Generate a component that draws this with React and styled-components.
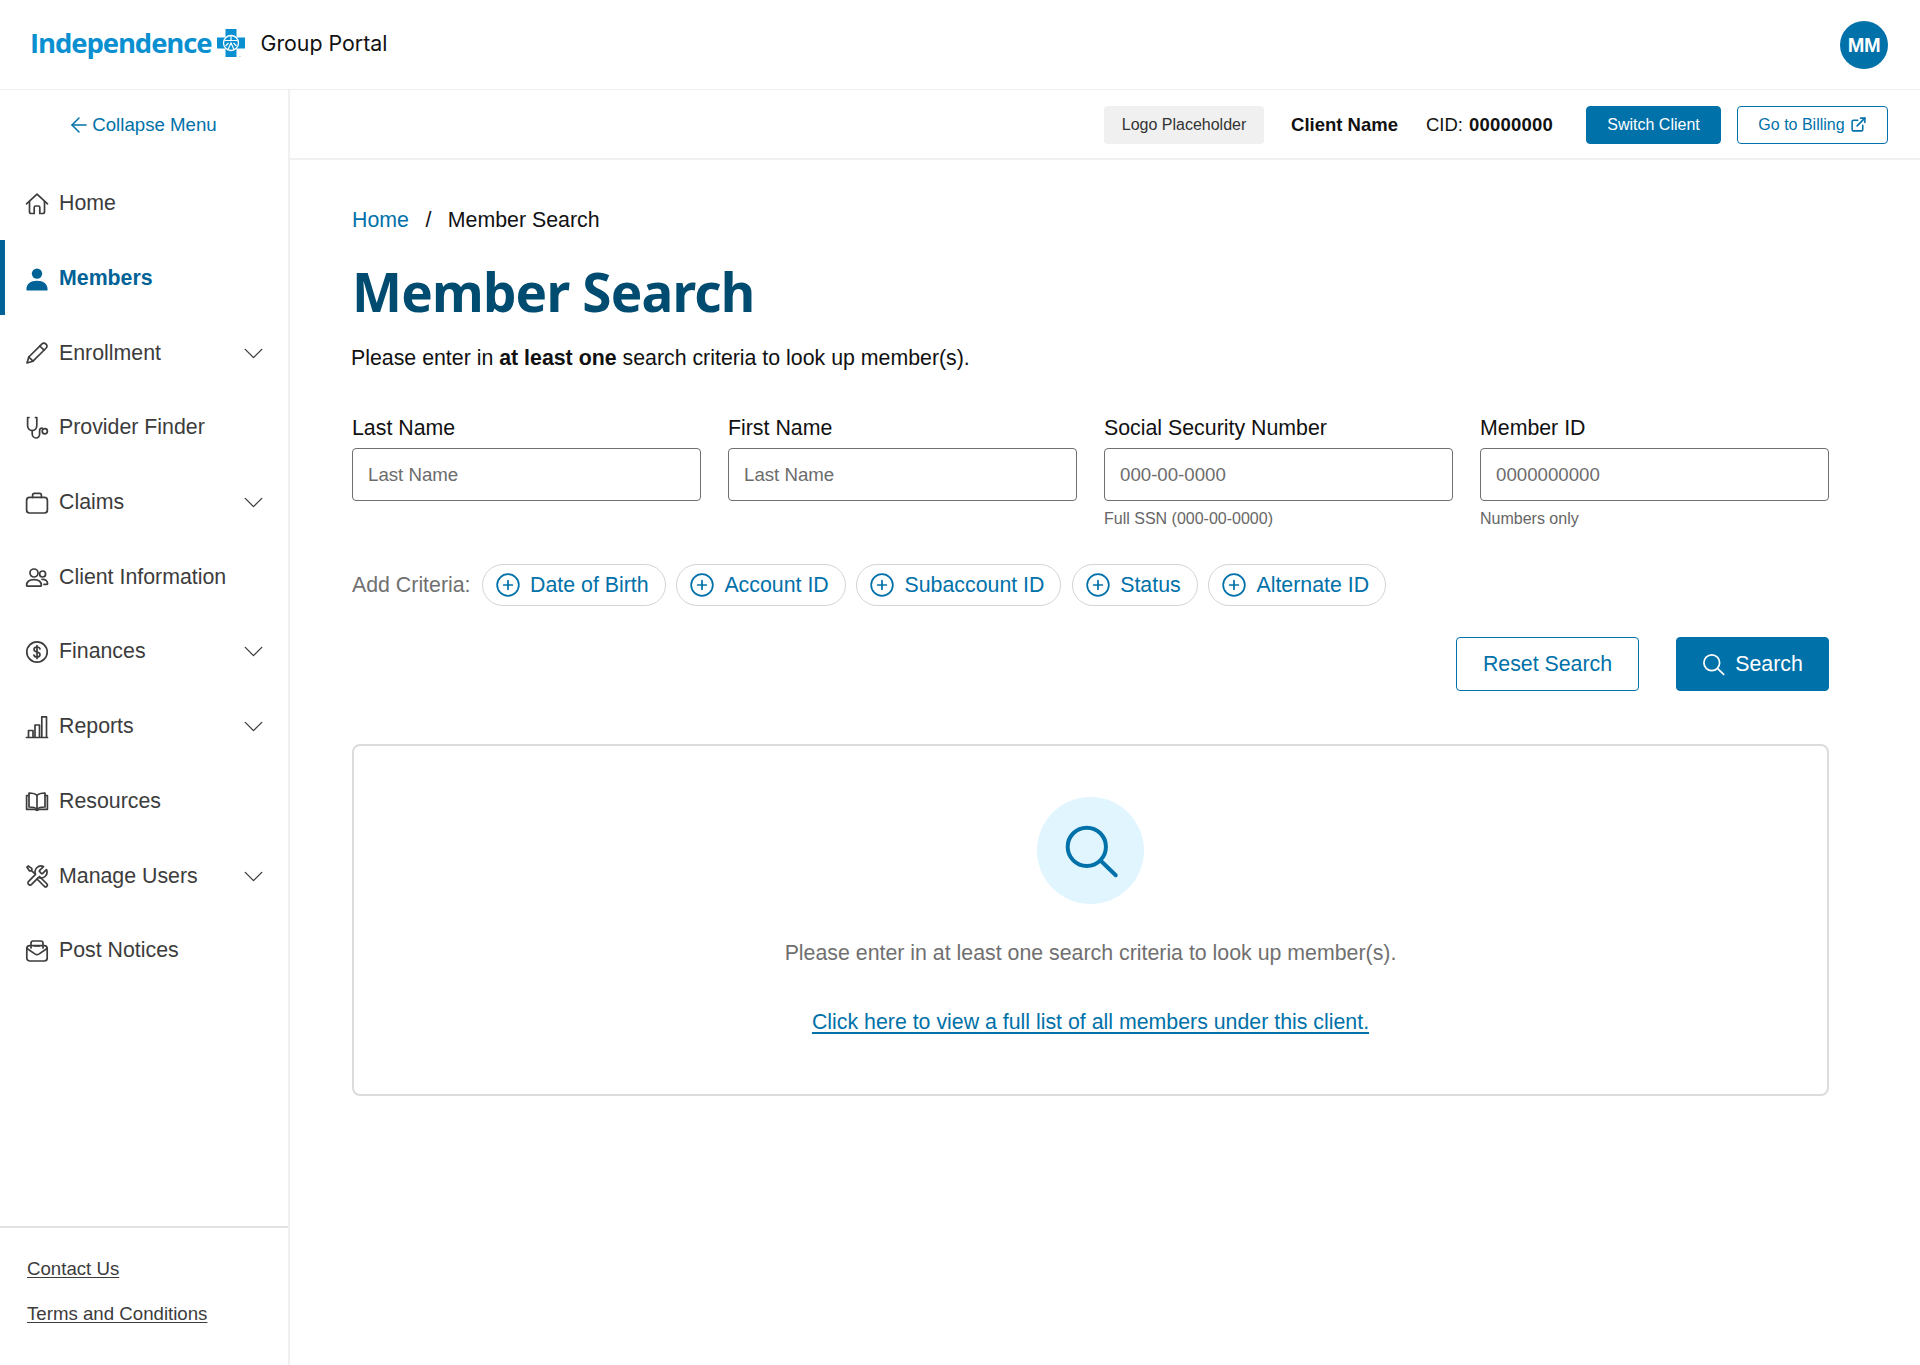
import React from "react";
import styled, { createGlobalStyle } from "styled-components";
import { ArrowLeft, ChevronDown, CirclePlus, ExternalLink } from "lucide-react";

const GlobalStyle = createGlobalStyle`
  html, body {
    margin: 0;
    padding: 0;
    background: #fff;
    font-family: "Liberation Sans", Arial, sans-serif;
    color: #111;
  }
  * { box-sizing: border-box; }
`;

const Shell = styled.div`
  min-height: 1365px;
  display: flex;
  flex-direction: column;
`;

const Header = styled.header`
  height: 90px;
  flex: none;
  display: flex;
  align-items: center;
  justify-content: space-between;
  padding: 0 32px 0 30px;
  border-bottom: 1px solid #eeeeee;
`;

const Brand = styled.div`
  display: flex;
  align-items: center;
  margin-top: -3px;
`;

const LogoWord = styled.span`
  font-family: "Open Sans", "Noto Sans", sans-serif;
  font-weight: 700;
  font-size: 27.5px;
  letter-spacing: -1.1px;
  color: #0a8fd1;
  line-height: 1;
`;

const LogoMark = styled.svg`
  width: 28px;
  height: 28px;
  margin-left: 6px;
  overflow: visible;
`;

const PortalName = styled.span`
  font-family: "Inter", "Noto Sans", sans-serif;
  font-size: 21.33px;
  color: #111;
  margin-left: 15px;
`;

const Avatar = styled.div`
  width: 48px;
  height: 48px;
  margin-top: 1px;
  border-radius: 50%;
  background: #0071a9;
  color: #fff;
  font-weight: 700;
  font-size: 20px;
  letter-spacing: -0.5px;
  display: flex;
  align-items: center;
  justify-content: center;
`;

const Body = styled.div`
  flex: 1;
  display: flex;
`;

const Sidebar = styled.aside`
  width: 290px;
  flex: none;
  display: flex;
  flex-direction: column;
  border-right: 2px solid #f0f0f0;
`;

const CollapseLink = styled.a`
  height: 70px;
  display: flex;
  align-items: center;
  justify-content: center;
  gap: 1px;
  padding-right: 4px;
  color: #0071a9;
  font-size: 18.67px;
`;

const NavList = styled.nav`
  display: flex;
  flex-direction: column;
  padding-top: 5.5px;
`;

const NavRow = styled.a`
  height: 74.7px;
  display: flex;
  align-items: center;
  gap: 10px;
  padding: 2px 18px 0 ${(p) => (p.$active ? "20px" : "25px")};
  border-left: ${(p) => (p.$active ? "5px solid #006296" : "none")};
  font-size: 21.33px;
  font-weight: ${(p) => (p.$active ? 700 : 400)};
  color: ${(p) => (p.$active ? "#006296" : "#3c3c3c")};
  svg { flex: none; }
`;

const NavLabel = styled.span`
  flex: 1;
`;

const NavIcon = styled.svg`
  width: 24px;
  height: 24px;
  fill: none;
  stroke: currentColor;
  stroke-width: 1.7;
  stroke-linecap: round;
  stroke-linejoin: round;
`;

const SideFooter = styled.div`
  margin-top: auto;
  height: 139px;
  border-top: 2px solid #e2e2e2;
  padding: 30px 0 0 27px;
  display: flex;
  flex-direction: column;
  align-items: flex-start;
  gap: 24px;
`;

const FooterLink = styled.a`
  font-size: 18.67px;
  line-height: 21px;
  color: #3c3c3c;
  text-decoration: underline;
  text-underline-offset: 2px;
`;

const Main = styled.main`
  flex: 1;
  min-width: 0;
  display: flex;
  flex-direction: column;
`;

const ClientBar = styled.div`
  height: 70px;
  flex: none;
  display: flex;
  align-items: center;
  justify-content: flex-end;
  padding: 1px 32px 0 0;
  border-bottom: 2px solid #f0f0f0;
`;

const LogoPlaceholder = styled.div`
  width: 160px;
  height: 38px;
  border-radius: 4px;
  background: #f0f0f0;
  color: #333;
  font-size: 16px;
  display: flex;
  align-items: center;
  justify-content: center;
`;

const ClientName = styled.strong`
  font-size: 18.5px;
  margin-left: 27px;
`;

const ClientId = styled.span`
  font-size: 18.5px;
  margin-left: 28px;
  margin-right: 33px;
  b { margin-left: 1px; letter-spacing: 0.2px; }
`;

const SmallButton = styled.a`
  height: 38px;
  border-radius: 4px;
  display: flex;
  align-items: center;
  justify-content: center;
  gap: 5px;
  font-size: 16px;
  width: ${(p) => p.$width}px;
  margin-left: ${(p) => p.$gap || 0}px;
  color: ${(p) => (p.$filled ? "#fff" : "#0071a9")};
  background: ${(p) => (p.$filled ? "#0071a9" : "#fff")};
  border: 1.5px solid #0071a9;
`;

const Content = styled.div`
  padding: 45px 91px 0 62px;
`;

const Breadcrumb = styled.div`
  display: flex;
  font-size: 21.33px;
  line-height: 30px;
  gap: 16.5px;
`;

const Crumb = styled.a`
  color: #0071a9;
`;

const Title = styled.h1`
  margin: 21px 0 0;
  font-family: "Noto Sans", "Open Sans", sans-serif;
  font-weight: 700;
  font-size: 53px;
  line-height: 72px;
  color: #004b70;
  letter-spacing: -0.8px;
`;

const Intro = styled.p`
  margin: 15px 0 0 -1px;
  font-size: 21.33px;
  line-height: 30px;
  color: #111;
`;

const FieldGrid = styled.div`
  margin-top: 40px;
  display: grid;
  grid-template-columns: repeat(4, 349px);
  column-gap: 27px;
`;

const Field = styled.div`
  display: flex;
  flex-direction: column;
`;

const FieldLabel = styled.label`
  font-size: 21.33px;
  line-height: 30px;
  margin-bottom: 5px;
`;

const TextInput = styled.input`
  height: 53px;
  width: 100%;
  border: 1.5px solid #6f6f6f;
  border-radius: 4px;
  padding: 0 15px;
  font: 400 18.67px "Liberation Sans", Arial, sans-serif;
  outline: none;
  &::placeholder { color: #6c6c6c; opacity: 1; }
`;

const Helper = styled.div`
  font-size: 16px;
  line-height: 20px;
  color: #666;
  margin-top: 8px;
`;

const CriteriaRow = styled.div`
  margin-top: 35px;
  display: flex;
  align-items: center;
  height: 42px;
`;

const CriteriaLabel = styled.span`
  font-size: 21.33px;
  color: #707070;
  margin-right: 11px;
`;

const Chip = styled.a`
  height: 42px;
  padding: 0 16px 0 12px;
  margin-right: 10.3px;
  border: 1.5px solid #d4d4d4;
  border-radius: 21px;
  display: flex;
  align-items: center;
  gap: 9.5px;
  font-size: 21.33px;
  color: #0071a9;
`;

const Actions = styled.div`
  margin-top: 31px;
  display: flex;
  justify-content: flex-end;
  gap: 37px;
`;

const ActionButton = styled.a`
  height: 54px;
  width: ${(p) => p.$width}px;
  padding-top: 1px;
  border-radius: 4px;
  display: flex;
  align-items: center;
  justify-content: center;
  gap: 10px;
  font-size: 21.33px;
  color: ${(p) => (p.$filled ? "#fff" : "#0071a9")};
  background: ${(p) => (p.$filled ? "#0071a9" : "#fff")};
  border: 1.5px solid #0071a9;
`;

const EmptyCard = styled.section`
  margin-top: 53px;
  height: 352px;
  border: 2px solid #dcdcdc;
  border-radius: 8px;
  display: flex;
  flex-direction: column;
  align-items: center;
  padding-top: 51px;
`;

const IconCircle = styled.div`
  width: 107px;
  height: 107px;
  border-radius: 50%;
  background: #e1f5fe;
  display: flex;
  align-items: center;
  justify-content: center;
  color: #0071a9;
`;

const EmptyText = styled.p`
  margin: 34px 0 0;
  font-size: 21.33px;
  line-height: 30px;
  color: #707070;
`;

const EmptyLink = styled.a`
  margin-top: 39px;
  font-size: 21.33px;
  line-height: 30px;
  color: #0071a9;
  text-decoration: underline;
  text-underline-offset: 3px;
`;

const SearchGlyph = ({ size, width }) => (
  <svg width={size} height={size} viewBox="0 0 24 24" fill="none" stroke="currentColor" strokeWidth={width} strokeLinecap="round">
    <circle cx="10.2" cy="10.2" r="8.2" />
    <path d="M16.4 16.4 22.6 22.4" />
  </svg>
);

const icons = {
  home: (
    <NavIcon viewBox="0 0 24 24">
      <path d="M1.5 11.8 12 2.2l10.5 9.6" />
      <path d="M4.5 9.5v10.2c0 1 .7 1.8 1.8 1.8h2.9v-6a1.5 1.5 0 0 1 1.5-1.5h2.600a1.500 1.500 0 0 1 1.500 1.500v6h2.900c1 0 1.800-.8 1.800-1.800V9.500" />
    </NavIcon>
  ),
  members: (
    <NavIcon viewBox="0 0 24 24" style={{ fill: "currentColor", stroke: "none" }}>
      <circle cx="12" cy="6.600" r="5.200" />
      <path d="M1.400 22.400c0-5.400 4.200-8.600 10.600-8.600s10.600 3.200 10.600 8.600c0 .6-.4 1-1 1H2.400c-.6 0-1-.4-1-1z" />
    </NavIcon>
  ),
  enrollment: (
    <NavIcon viewBox="0 0 24 24">
      <path d="M17 2.800a2.600 2.600 0 0 1 3.700 0l.5.5a2.600 2.600 0 0 1 0 3.700L8 20.200l-6 1.800 1.800-6z" />
      <path d="m14.800 5 4.200 4.200M3.800 16 8 20.200" />
    </NavIcon>
  ),
  provider: (
    <NavIcon viewBox="0 0 24 24">
      <path d="M4 1.500H2.600v8c0 3 2.200 5 4.600 5s4.600-2 4.600-5v-8h-1.400" />
      <path d="M7.200 14.500v3.300c0 2.400 1.700 4.200 3.800 4.200s3.600-1.800 3.600-4v-3.400c0-1.700 1.200-2.600 2.600-2.600" />
      <circle cx="19.800" cy="15.200" r="2.600" />
    </NavIcon>
  ),
  claims: (
    <NavIcon viewBox="0 0 24 24">
      <rect x="1.600" y="6.400" width="20.800" height="15.600" rx="3" />
      <path d="M7.600 6.400V4.200c0-1 .8-1.800 1.800-1.800h5.200c1 0 1.800.8 1.800 1.800v2.200" />
    </NavIcon>
  ),
  client: (
    <NavIcon viewBox="0 0 24 24">
      <circle cx="9" cy="8" r="4" />
      <circle cx="17.600" cy="9" r="3" />
      <path d="M1.600 20.600c0-3.800 3-6 7.400-6s7.400 2.200 7.400 6c0 .4-.3.6-.6.6H2.200c-.3 0-.6-.2-.6-.6z" />
      <path d="M17 14.400c3.400-.3 5.600 1.400 5.600 4.400 0 .4-.3.6-.6.6h-3" />
    </NavIcon>
  ),
  finances: (
    <NavIcon viewBox="0 0 24 24">
      <circle cx="12" cy="12" r="10.200" />
      <path d="M15 9c-.3-1.200-1.500-2-3-2-1.800 0-3 1-3 2.500 0 3.300 6 1.700 6 5 0 1.500-1.300 2.500-3 2.500-1.600 0-2.800-.8-3.100-2M12 5.600v12.800" />
    </NavIcon>
  ),
  reports: (
    <NavIcon viewBox="0 0 24 24">
      <path d="M1.500 22.500h21M3.500 22.500V15.500h4.500v7M10 22.500V10h4.500v12.500M16.800 22.500V1.800h4.700v20.700" />
    </NavIcon>
  ),
  resources: (
    <NavIcon viewBox="0 0 24 24">
      <path d="M12 6.500C10.500 4.800 8 4 4 4v14c4 0 6.500.6 8 2.200 1.500-1.600 4-2.200 8-2.200V4c-4 0-6.500.8-8 2.500zM12 6.500v13.700" />
      <path d="M4 6.500H1.600v13.800H9c1.300 0 2.300.4 3 1 .7-.6 1.700-1 3-1h7.400V6.500H20" />
    </NavIcon>
  ),
  manage: (
    <NavIcon viewBox="0 0 24 24">
      <path d="M14.700 6.300a1 1 0 0 0 0 1.400l1.600 1.600a1 1 0 0 0 1.400 0l3.770-3.770a6 6 0 0 1-7.940 7.940l-6.910 6.910a2.120 2.120 0 0 1-3-3l6.910-6.910a6 6 0 0 1 7.940-7.940z" />
      <path d="M2 3.200 3.200 2l3.600 2.400v2.400H4.400zM6.800 6.800l2.700 2.700M14.500 12.500 22 20a1.800 1.800 0 0 1-2.500 2.500L12 15" />
    </NavIcon>
  ),
  notices: (
    <NavIcon viewBox="0 0 24 24">
      <path d="M6 9V4.200C6 3 7 2 8.200 2h7.600C17 2 18 3 18 4.200V9" />
      <rect x="1.800" y="6.600" width="20.400" height="15.400" rx="3" />
      <path d="m2 9.500 7.800 5.400c1.400.9 3 .9 4.400 0L22 9.500M9.500 6.800h5" />
    </NavIcon>
  ),
};

const navItems = [
  { key: "home", label: "Home" },
  { key: "members", label: "Members", active: true },
  { key: "enrollment", label: "Enrollment", sub: true },
  { key: "provider", label: "Provider Finder" },
  { key: "claims", label: "Claims", sub: true },
  { key: "client", label: "Client Information" },
  { key: "finances", label: "Finances", sub: true },
  { key: "reports", label: "Reports", sub: true },
  { key: "resources", label: "Resources" },
  { key: "manage", label: "Manage Users", sub: true },
  { key: "notices", label: "Post Notices" },
];

const fields = [
  { label: "Last Name", placeholder: "Last Name" },
  { label: "First Name", placeholder: "Last Name" },
  { label: "Social Security Number", placeholder: "000-00-0000", help: "Full SSN (000-00-0000)" },
  { label: "Member ID", placeholder: "0000000000", help: "Numbers only" },
];

const criteria = ["Date of Birth", "Account ID", "Subaccount ID", "Status", "Alternate ID"];

export default function App() {
  return (
    <>
      <GlobalStyle />
      <Shell>
        <Header>
          <Brand>
            <LogoWord>Independence</LogoWord>
            <LogoMark viewBox="0 0 28 28">
              <path fill="#0a8fd1" d="M8.500 0h11v8.500H28v11h-8.500V28h-11v-8.500H0v-11h8.500z" />
              <circle cx="14" cy="14" r="7.500" fill="none" stroke="#fff" strokeWidth="1.300" />
              <path fill="none" stroke="#fff" strokeWidth="1.200" d="M8 11.500h12M14 7v4.500M11 20.500l3-6.500 3 6.500M8.500 17l3-3M19.500 17l-3-3" />
              <circle cx="23" cy="27.500" r="0.600" fill="#7fc4e6" />
            </LogoMark>
            <PortalName>Group Portal</PortalName>
          </Brand>
          <Avatar>MM</Avatar>
        </Header>
        <Body>
          <Sidebar>
            <CollapseLink>
              <ArrowLeft size={24} strokeWidth={1.5} />
              Collapse Menu
            </CollapseLink>
            <NavList>
              {navItems.map((item) => (
                <NavRow key={item.key} $active={item.active}>
                  {icons[item.key]}
                  <NavLabel>{item.label}</NavLabel>
                  {item.sub && <ChevronDown size={33} strokeWidth={1} />}
                </NavRow>
              ))}
            </NavList>
            <SideFooter>
              <FooterLink>Contact Us</FooterLink>
              <FooterLink>Terms and Conditions</FooterLink>
            </SideFooter>
          </Sidebar>
          <Main>
            <ClientBar>
              <LogoPlaceholder>Logo Placeholder</LogoPlaceholder>
              <ClientName>Client Name</ClientName>
              <ClientId>
                CID: <b>00000000</b>
              </ClientId>
              <SmallButton $filled $width={135}>Switch Client</SmallButton>
              <SmallButton $width={151} $gap={16}>
                Go to Billing
                <ExternalLink size={17} strokeWidth={2.2} />
              </SmallButton>
            </ClientBar>
            <Content>
              <Breadcrumb>
                <Crumb>Home</Crumb>
                <span>/</span>
                <span>Member Search</span>
              </Breadcrumb>
              <Title>Member Search</Title>
              <Intro>
                Please enter in <b>at least one</b> search criteria to look up member(s).
              </Intro>
              <FieldGrid>
                {fields.map((field) => (
                  <Field key={field.label}>
                    <FieldLabel>{field.label}</FieldLabel>
                    <TextInput placeholder={field.placeholder} />
                    {field.help && <Helper>{field.help}</Helper>}
                  </Field>
                ))}
              </FieldGrid>
              <CriteriaRow>
                <CriteriaLabel>Add Criteria:</CriteriaLabel>
                {criteria.map((name) => (
                  <Chip key={name}>
                    <CirclePlus size={26} strokeWidth={1.6} />
                    {name}
                  </Chip>
                ))}
              </CriteriaRow>
              <Actions>
                <ActionButton $width={183}>Reset Search</ActionButton>
                <ActionButton $filled $width={153}>
                  <SearchGlyph size={23} width={1.8} />
                  Search
                </ActionButton>
              </Actions>
              <EmptyCard>
                <IconCircle>
                  <SearchGlyph size={56} width={1.7} />
                </IconCircle>
                <EmptyText>Please enter in at least one search criteria to look up member(s).</EmptyText>
                <EmptyLink>Click here to view a full list of all members under this client.</EmptyLink>
              </EmptyCard>
            </Content>
          </Main>
        </Body>
      </Shell>
    </>
  );
}
